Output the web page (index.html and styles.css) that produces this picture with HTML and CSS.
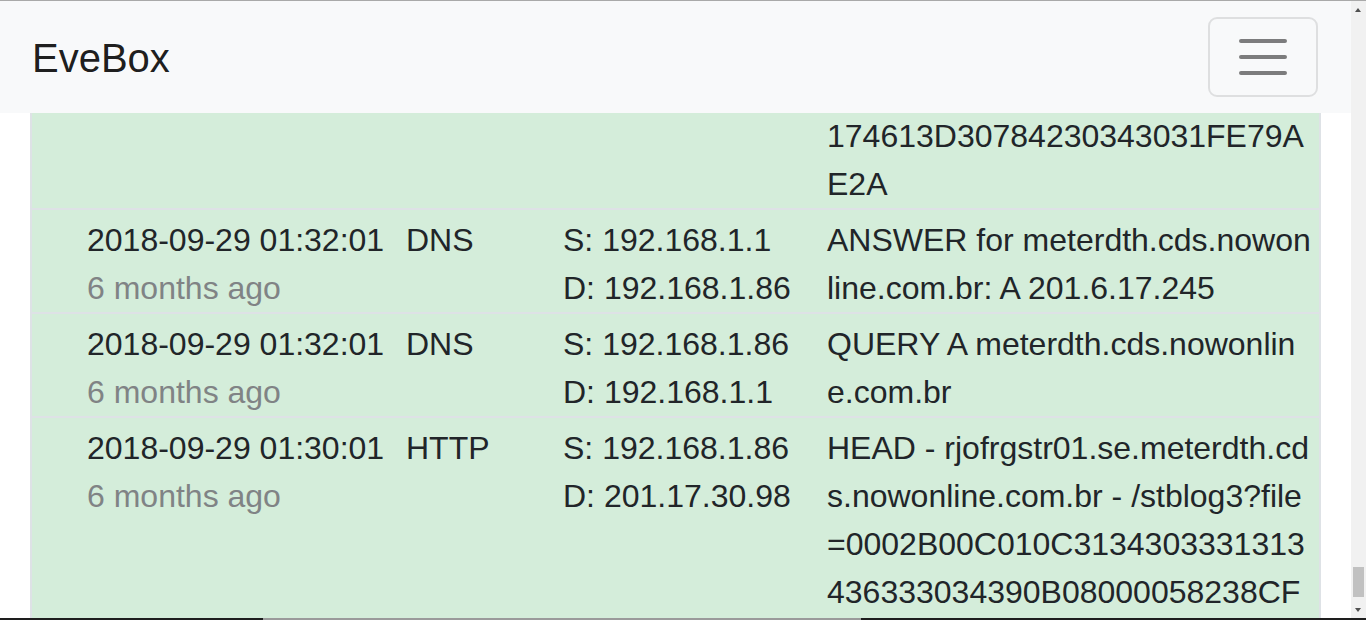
FILE: index.html
```html
<!DOCTYPE html>
<html lang="en">
<head>
<meta charset="utf-8">
<title>EveBox</title>
<link rel="stylesheet" href="styles.css">
</head>
<body>
<div class="frame-top"></div>
<nav class="navbar">
  <a class="brand" href="#">EveBox</a>
  <button class="toggler" type="button" aria-label="Toggle navigation">
    <svg viewBox="0 0 30 30" width="60" height="60" aria-hidden="true"><path d="M4 7h22M4 15h22M4 23h22" stroke="rgba(0,0,0,0.5)" stroke-width="2" stroke-linecap="round" fill="none"/></svg>
  </button>
</nav>
<main class="container">
  <div class="table-wrap">
    <table class="events">
      <colgroup>
        <col class="w-icon">
        <col class="w-time">
        <col class="w-proto">
        <col class="w-addr">
        <col>
      </colgroup>
      <tbody id="events">
        <tr>
          <td class="c-icon"></td>
          <td class="c-time"><div>2018-09-29 01:32:01</div><div class="muted">6 months ago</div></td>
          <td>HTTP</td>
          <td><div>S: 192.168.1.86</div><div>D: 201.17.30.98</div></td>
          <td class="c-desc">HEAD - rjofrgstr01.se.meterdth.cds.nowonline.com.br - /stblog3?file=0002B00C010C3134303331313436333034390B08000058238CF174613D30784230343031FE79AE2A</td>
        </tr>
        <tr id="anchor">
          <td class="c-icon"></td>
          <td class="c-time"><div>2018-09-29 01:32:01</div><div class="muted">6 months ago</div></td>
          <td>DNS</td>
          <td><div>S: 192.168.1.1</div><div>D: 192.168.1.86</div></td>
          <td class="c-desc">ANSWER for meterdth.cds.nowonline.com.br: A 201.6.17.245</td>
        </tr>
        <tr>
          <td class="c-icon"></td>
          <td class="c-time"><div>2018-09-29 01:32:01</div><div class="muted">6 months ago</div></td>
          <td>DNS</td>
          <td><div>S: 192.168.1.86</div><div>D: 192.168.1.1</div></td>
          <td class="c-desc">QUERY A meterdth.cds.nowonline.com.br</td>
        </tr>
        <tr>
          <td class="c-icon"></td>
          <td class="c-time"><div>2018-09-29 01:30:01</div><div class="muted">6 months ago</div></td>
          <td>HTTP</td>
          <td><div>S: 192.168.1.86</div><div>D: 201.17.30.98</div></td>
          <td class="c-desc">HEAD - rjofrgstr01.se.meterdth.cds.nowonline.com.br - /stblog3?file=0002B00C010C3134303331313436333034390B08000058238CF174613D30784230343031FE79AE2A</td>
        </tr>
      </tbody>
    </table>
  </div>
</main>
<div class="scrollbar" aria-hidden="true">
  <span class="sb-arrow sb-up"></span>
  <span class="sb-thumb"></span>
  <span class="sb-arrow sb-down"></span>
</div>
<div class="frame-bottom"></div>
<script src="app.js"></script>
</body>
</html>
```

FILE: styles.css
```css
* {
  box-sizing: border-box;
}

html,
body {
  margin: 0;
}

body {
  padding-top: 113px;
  margin-right: 15px;
  font-family: "Liberation Sans", Arial, sans-serif;
  font-size: 32px;
  line-height: 1.5;
  color: #212529;
  background: #fff;
}

.frame-top {
  position: fixed;
  top: 0;
  left: 0;
  right: 0;
  height: 1px;
  background: #a9a9a9;
  z-index: 30;
}

.frame-bottom {
  position: fixed;
  bottom: 0;
  left: 0;
  right: 0;
  height: 2px;
  background: linear-gradient(to right, #1e1e1e 0, #1e1e1e 263px, #9a9a9a 263px, #9a9a9a 861px, #1e1e1e 861px);
  z-index: 30;
}

.navbar {
  position: fixed;
  top: 1px;
  left: 0;
  right: 15px;
  height: 112px;
  display: flex;
  align-items: center;
  justify-content: space-between;
  padding: 0 33px 0 32px;
  background: #f8f9fa;
  z-index: 10;
}

.brand {
  font-size: 40px;
  line-height: 60px;
  padding: 11px 0 9px;
  color: rgba(0, 0, 0, 0.9);
  text-decoration: none;
}

.toggler {
  width: 110px;
  height: 80px;
  padding: 0;
  display: flex;
  align-items: center;
  justify-content: center;
  background: transparent;
  border: 2px solid rgba(0, 0, 0, 0.1);
  border-radius: 9px;
}

.toggler svg {
  display: block;
}

.container {
  padding: 0 30px 32px;
}

.table-wrap {
  border-left: 2px solid #dee2e6;
  border-right: 2px solid #dee2e6;
  margin-bottom: 32px;
}

.events {
  width: 100%;
  table-layout: fixed;
  border-collapse: separate;
  border-spacing: 0;
}

.w-icon { width: 43px; }
.w-time { width: 319px; }
.w-proto { width: 157px; }
.w-addr { width: 264px; }

.events td {
  background: #d4edda;
  border-top: 2px solid #dee2e6;
  padding: 6px 12px 0;
  vertical-align: top;
}

.events td.c-icon {
  padding: 0;
}

.c-time {
  white-space: nowrap;
}

.muted {
  color: #808385;
}

.events td.c-desc {
  padding-right: 5px;
  word-break: break-all;
}

/* window scrollbar (drawn, since the capture hides native scrollbars) */
.scrollbar {
  position: fixed;
  top: 0;
  right: 0;
  bottom: 0;
  width: 15px;
  background: #f1f1f1;
  z-index: 20;
}

.sb-arrow {
  position: absolute;
  left: 4px;
  width: 0;
  height: 0;
  border-left: 3.5px solid transparent;
  border-right: 3.5px solid transparent;
}

.sb-up {
  top: 8px;
  border-bottom: 4px solid #505050;
}

.sb-down {
  bottom: 8px;
  border-top: 4px solid #505050;
}

.sb-thumb {
  position: absolute;
  left: 2px;
  right: 2px;
  top: 567px;
  height: 30px;
  background: #c1c1c1;
}
```

FILE: app.js
```js
(function () {
  var tbody = document.getElementById('events');
  var first = tbody.firstElementChild;
  var httpDesc = 'HEAD - rjofrgstr01.se.meterdth.cds.nowonline.com.br - /stblog3?file=0002B00C010C3134303331313436333034390B08000058238CF174613D30784230343031FE79AE2A';

  function pad(n) {
    return (n < 10 ? '0' : '') + n;
  }

  function row(time, proto, src, dst, desc) {
    var tr = document.createElement('tr');
    tr.innerHTML =
      '<td class="c-icon"></td>' +
      '<td class="c-time"><div>2018-09-29 ' + time + '</div><div class="muted">6 months ago</div></td>' +
      '<td>' + proto + '</td>' +
      '<td><div>S: ' + src + '</div><div>D: ' + dst + '</div></td>' +
      '<td class="c-desc">' + desc + '</td>';
    return tr;
  }

  var frag = document.createDocumentFragment();
  for (var i = 22; i >= 1; i--) {
    var total = 92 + 2 * i;
    var t = pad(Math.floor(total / 60)) + ':' + pad(total % 60) + ':01';
    frag.appendChild(row(t, 'HTTP', '192.168.1.86', '201.17.30.98', httpDesc));
    frag.appendChild(row(t, 'DNS', '192.168.1.1', '192.168.1.86', 'ANSWER for meterdth.cds.nowonline.com.br: A 201.6.17.245'));
    frag.appendChild(row(t, 'DNS', '192.168.1.86', '192.168.1.1', 'QUERY A meterdth.cds.nowonline.com.br'));
  }
  tbody.insertBefore(frag, first);

  var anchor = document.getElementById('anchor');
  window.scrollTo(0, anchor.getBoundingClientRect().top + window.pageYOffset - 208);
})();
```
